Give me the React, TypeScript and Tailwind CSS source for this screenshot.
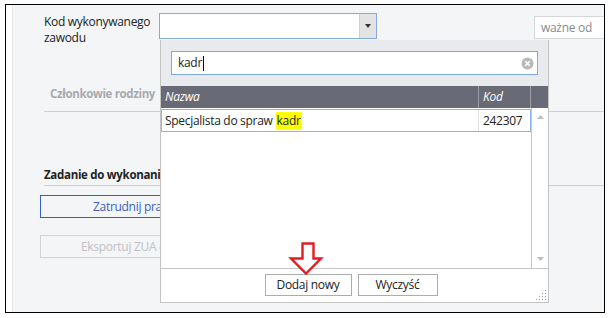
import React from 'react'

const font = { fontFamily: '"Open Sans", "Noto Sans", sans-serif' }

function RedArrow() {
  return (
    <svg className="absolute left-[288px] top-[241px]" width="36" height="36" viewBox="288 241 36 36">
      <path
        d="M302.5 243.5 H313.5 V258.5 H321 L306 273.5 L291 258.5 H302.5 Z"
        fill="white"
        stroke="#e31b23"
        strokeWidth="2.4"
        strokeLinejoin="miter"
      />
    </svg>
  )
}

function ResizeGrip() {
  const dots = [
    [10, 1],
    [7, 4], [10, 4],
    [4, 7], [7, 7], [10, 7],
    [1, 10], [4, 10], [7, 10], [10, 10],
  ]
  return (
    <svg className="absolute right-[1px] bottom-[1px]" width="12" height="12" viewBox="0 0 12 12">
      {dots.map(([x, y], i) => (
        <rect key={i} x={x} y={y} width="1" height="1" fill="#9a9a9a" />
      ))}
    </svg>
  )
}

function Dropdown() {
  return (
    <div className="absolute left-[160px] top-[40px] w-[389px] h-[263px] flex flex-col border-x border-b border-[#c3c3c3] bg-white text-[12px] tracking-[-0.3px] text-[#222]">
      {/* search */}
      <div className="h-[46px] bg-[#e9eaed] pt-[11px] px-[10px]">
        <div className="relative h-[24px] bg-white border border-[#7fa7e3] flex items-center pl-[6px]">
          <span>kadr</span>
          <span className="w-px h-[15px] bg-black ml-px" />
          <svg className="absolute right-[3px] top-[5px]" width="13" height="13" viewBox="0 0 13 13">
            <circle cx="6.5" cy="6.5" r="6" fill="#b9b9b9" />
            <path d="M4.3 4.3 L8.7 8.7 M8.7 4.3 L4.3 8.7" stroke="white" strokeWidth="1.6" />
          </svg>
        </div>
      </div>

      {/* header */}
      <div className="h-[22px] bg-[#686b75] flex text-white italic">
        <div className="w-[318px] border-r border-[#9b9da4] pl-[4px] flex items-center">Nazwa</div>
        <div className="w-[52px] border-r border-[#9b9da4] pl-[4px] flex items-center">Kod</div>
        <div className="flex-1" />
      </div>

      {/* body */}
      <div className="flex-1 flex">
        <div className="w-[370px] pt-px">
          <div className="h-[23px] flex border border-[#8bb6ea]">
            <div className="w-[317px] border-r border-[#e2e2e2] pl-[3px] flex items-center">
              Specjalista do spraw <span className="bg-[#ffff00] ml-[3px] px-px">kadr</span>
            </div>
            <div className="flex-1 pl-[4px] flex items-center">242307</div>
          </div>
        </div>
        <div className="flex-1 border-l border-[#c6c6c6] flex flex-col items-center justify-between py-[7px]">
          <svg width="7" height="4" viewBox="0 0 7 4"><path d="M0 4 L3.5 0 L7 4 Z" fill="#bdbdbd" /></svg>
          <svg width="7" height="4" viewBox="0 0 7 4"><path d="M0 0 L3.5 4 L7 0 Z" fill="#bdbdbd" /></svg>
        </div>
      </div>

      {/* footer */}
      <div className="relative h-[34px] border-t border-[#c6c6c6] flex justify-center gap-[6px] pt-[5px] pr-[7px]">
        <button className="w-[87px] h-[22px] border border-[#adadad] bg-white flex items-center justify-center">Dodaj nowy</button>
        <button className="w-[80px] h-[22px] border border-[#adadad] bg-white flex items-center justify-center">Wyczyść</button>
        <ResizeGrip />
      </div>
    </div>
  )
}

export default function App() {
  return (
    <div className="relative w-[610px] h-[318px] bg-white pt-[4px] pl-[5px]" style={font}>
      <div className="w-[600px] h-[309px] border border-black flex overflow-hidden">
        <div className="w-[6px] shrink-0 bg-white border-r border-[#e3e5e8] box-content" />
        <div className="flex-1 min-w-0 bg-[#f4f5f7] text-[12px] tracking-[-0.3px] text-[#222]">
          {/* top row */}
          <div className="flex items-start pt-[8px] h-[34px]">
            <div className="w-[115px] shrink-0 ml-[31px] leading-[16px] pt-[1px] whitespace-nowrap">
              Kod wykonywanego
              <br />
              zawodu
            </div>
            <div className="w-[218px] shrink-0 h-[26px] bg-white border border-[#86a9d9] flex justify-end">
              <div className="w-[17px] bg-[#e3e3e3] border-l border-[#cfcfcf] flex items-center justify-center">
                <svg width="6" height="4" viewBox="0 0 6 4"><path d="M0 0 H6 L3 4 Z" fill="#333" /></svg>
              </div>
            </div>
            <div className="ml-[157px] shrink-0 mt-[3px] w-[80px] h-[23px] bg-white border border-[#d4d6d9] pl-[6px] flex items-center text-[#8a8c90]">
              ważne od
            </div>
          </div>

          {/* Członkowie rodziny */}
          <div className="ml-[31px] pt-[47px] pb-[9px] border-b border-[#cdd0d3]">
            <div className="pl-[6px] leading-[16px] text-[11.5px] font-bold tracking-[-0.35px] text-[#a8aaad] whitespace-nowrap">Członkowie rodziny</div>
          </div>

          {/* Zadanie do wykonania */}
          <div className="ml-[31px] pt-[55px] pb-[2px] border-b border-[#cdd0d3]">
            <div className="leading-[16px] text-[11.5px] font-bold tracking-[-0.3px] text-[#222] whitespace-nowrap">Zadanie do wykonania</div>
          </div>

          <div className="ml-[27px] mt-[9px] w-[232px] h-[23px] border-[1.5px] border-[#2f62c8] flex items-center pl-[52px] text-[#3a5fc6] whitespace-nowrap">
            Zatrudnij pracownika
          </div>
          <div className="ml-[27px] mt-[17px] w-[232px] h-[23px] border border-[#d2d3d5] flex items-center pl-[40px] text-[#c0c1c3] whitespace-nowrap">
            Eksportuj ZUA do Płatnika
          </div>
        </div>
      </div>
      <Dropdown />
      <RedArrow />
    </div>
  )
}
